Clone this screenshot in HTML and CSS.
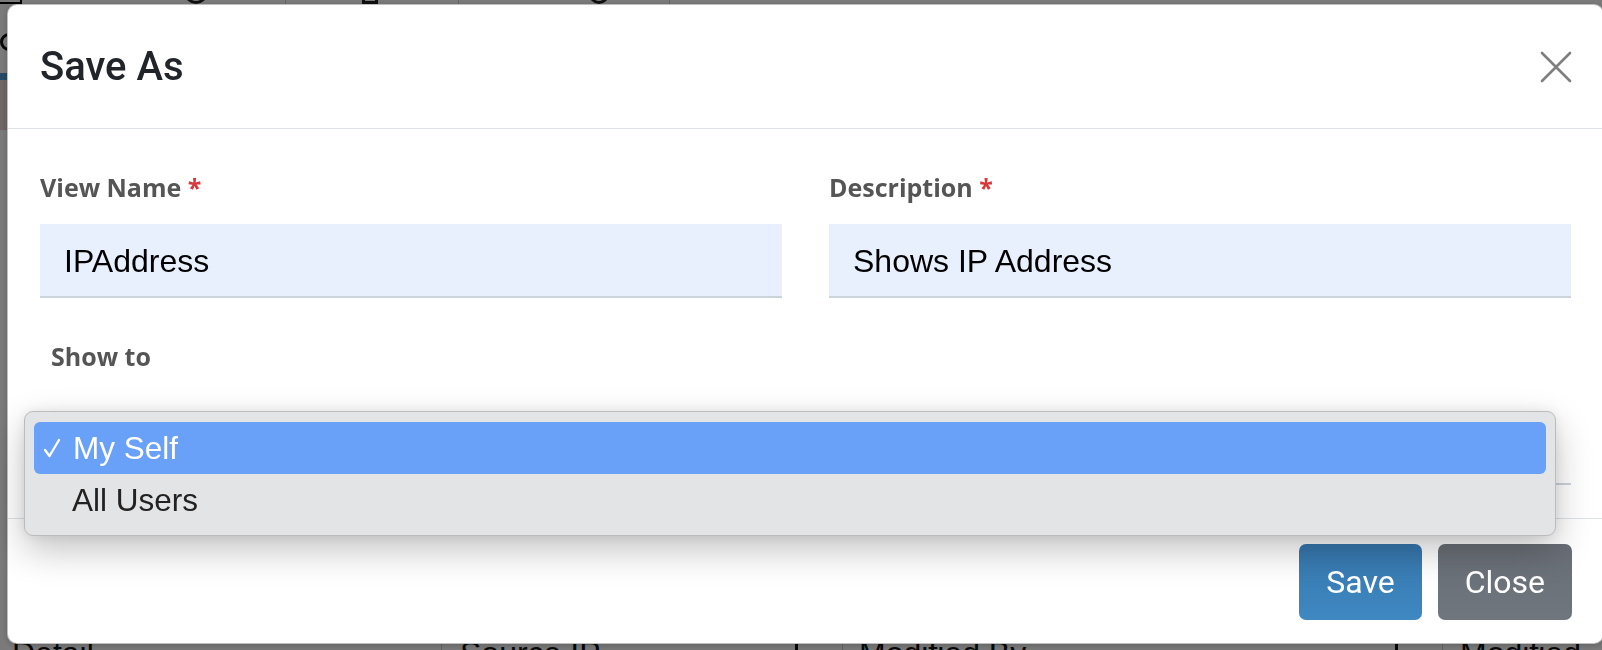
FILE: index.html
```html
<!DOCTYPE html>
<html lang="en">
<head>
<meta charset="utf-8">
<title>Save As</title>
<link rel="stylesheet" href="styles.css">
</head>
<body>
<div class="page">
  <div class="toolbar">
    <span class="tb-corner"></span>
    <span class="tb-icon tb-circle"></span>
    <span class="tb-sep tb-sep1"></span>
    <span class="tb-icon tb-doc"></span>
    <span class="tb-sep tb-sep2"></span>
    <span class="tb-icon tb-shield"></span>
    <span class="tb-sep tb-sep3"></span>
  </div>
  <div class="crumb"><span class="crumb-icon"></span></div>
  <div class="bluebar"></div>
  <div class="pinkrow"></div>
  <div class="spacer"></div>
  <div class="thead">
    <div class="th th-detail">Detail</div>
    <div class="th th-src"><span>Source IP</span><span class="grip"></span></div>
    <div class="th th-mod"><span>Modified By</span><span class="grip"></span></div>
    <div class="th th-date"><span>Modified</span></div>
  </div>
</div>

<div class="backdrop"></div>

<div class="modal">
  <div class="modal-header">
    <h5 class="modal-title">Save As</h5>
    <button class="btn-close" type="button" aria-label="Close">
      <svg width="32" height="32" viewBox="0 0 32 32"><path d="M2 2 L30 30 M30 2 L2 30" stroke="#7f7f7f" stroke-width="2.6" stroke-linecap="round" fill="none"/></svg>
    </button>
  </div>
  <div class="modal-body">
    <div class="row">
      <div class="field">
        <label class="label">View Name <span class="req">*</span></label>
        <div class="input">IPAddress</div>
      </div>
      <div class="field">
        <label class="label">Description <span class="req">*</span></label>
        <div class="input">Shows IP Address</div>
      </div>
    </div>
    <label class="label label-show">Show to</label>
    <div class="select-wrap">
      <div class="select" aria-label="Show to"></div>
      <div class="popup">
        <div class="option option-active">
          <svg class="check" width="18" height="20" viewBox="0 0 18 20"><path d="M2 12 L6.5 18 L16 2" stroke="#ffffff" stroke-width="2.3" fill="none" stroke-linecap="round" stroke-linejoin="round"/></svg>
          <span>My Self</span>
        </div>
        <div class="option">
          <span class="check-space"></span>
          <span>All Users</span>
        </div>
      </div>
    </div>
  </div>
  <div class="modal-footer">
    <button class="btn btn-save" type="button">Save</button>
    <button class="btn btn-close-footer" type="button">Close</button>
  </div>
</div>
</body>
</html>
```

FILE: styles.css
```css
html, body {
  margin: 0;
  padding: 0;
  height: 650px;
  overflow: hidden;
}

body {
  font-family: "Liberation Sans", Arial, sans-serif;
  background: #ffffff;
  color: #212529;
}

/* ---------- background page (behind the backdrop) ---------- */
.page {
  width: 1602px;
  display: flex;
  flex-direction: column;
}

.toolbar {
  height: 5px;
  display: flex;
  align-items: flex-end;
  overflow: hidden;
}

.tb-corner {
  width: 20px;
  height: 10px;
  border-right: 2px solid #000;
  border-bottom: 2px solid #000;
  margin-bottom: 1px;
  flex: none;
}

.tb-icon {
  flex: none;
  height: 20px;
  border: 3px solid #222;
  box-sizing: border-box;
  margin-bottom: 1px;
}

.tb-circle {
  width: 22px;
  border-radius: 50%;
  margin-left: 163px;
}

.tb-doc {
  width: 16px;
  margin-left: 76px;
}

.tb-shield {
  width: 20px;
  border-radius: 0 0 10px 10px;
  margin-left: 130px;
}

.tb-sep {
  flex: none;
  width: 1px;
  height: 5px;
  background: #cfcfcf;
}

.tb-sep1 { margin-left: 78px; }
.tb-sep2 { margin-left: 80px; }
.tb-sep3 { margin-left: 60px; }

.crumb {
  height: 68px;
  box-sizing: border-box;
  padding-top: 28px;
}

.crumb-icon {
  display: block;
  width: 18px;
  height: 18px;
  box-sizing: border-box;
  border: 3px solid #111;
  border-radius: 50%;
}

.bluebar {
  height: 7px;
  background: #4f9ad4;
}

.pinkrow {
  height: 50px;
  background: #e8d6d6;
}

.spacer {
  height: 503px;
}

.thead {
  display: flex;
  height: 40px;
  font-size: 32px;
  line-height: 40px;
  color: #111;
}

.th {
  box-sizing: border-box;
  display: flex;
  justify-content: space-between;
  white-space: nowrap;
  flex: none;
}

.th-detail { width: 441px; padding-left: 12px; }
.th-src { width: 401px; padding-left: 18px; border-left: 1px solid #cfcfcf; }
.th-mod { width: 600px; padding-left: 16px; border-left: 1px solid #cfcfcf; }
.th-date { width: 160px; padding-left: 17px; border-left: 1px solid #cfcfcf; }

.grip {
  width: 3px;
  height: 40px;
  background: #111;
  margin-right: 44px;
}

/* ---------- backdrop ---------- */
.backdrop {
  position: fixed;
  inset: 0;
  background: rgba(0, 0, 0, 0.52);
}

/* ---------- modal ---------- */
.modal {
  position: fixed;
  left: 7px;
  top: 4px;
  width: 1597px;
  height: 640px;
  box-sizing: border-box;
  background: #ffffff;
  border: 1px solid rgba(0, 0, 0, 0.25);
  border-radius: 10px;
  display: flex;
  flex-direction: column;
  box-shadow: 0 2px 6px rgba(0, 0, 0, 0.2);
}

.modal-header {
  display: flex;
  align-items: center;
  justify-content: space-between;
  padding: 32px 31px 31px 32px;
  border-bottom: 1px solid #dee2e6;
}

.modal-title {
  margin: 0;
  font-family: Roboto, "Liberation Sans", sans-serif;
  font-weight: 500;
  font-size: 40px;
  line-height: 60px;
  color: #212529;
}

.btn-close {
  border: 0;
  background: transparent;
  padding: 0;
  width: 32px;
  height: 32px;
  display: block;
}

.btn-close svg {
  display: block;
}

.modal-body {
  flex: 1;
  padding: 40px 32px 33px 32px;
  display: flex;
  flex-direction: column;
}

.row {
  display: grid;
  grid-template-columns: 1fr 1fr;
  column-gap: 47px;
}

.field {
  display: flex;
  flex-direction: column;
}

.label {
  display: block;
  font-family: "Open Sans", "Liberation Sans", sans-serif;
  font-weight: 700;
  font-size: 25px;
  line-height: 36px;
  color: #555555;
  margin-bottom: 19px;
}

.req {
  color: #d9383a;
}

.input {
  height: 74px;
  box-sizing: border-box;
  background: #e8f0fe;
  border-bottom: 2px solid #cdd3da;
  padding: 3px 24px 0 24px;
  display: flex;
  align-items: center;
  font-family: "Liberation Sans", Arial, sans-serif;
  font-size: 32px;
  color: #000000;
}

.label-show {
  margin-top: 40px;
  margin-bottom: 37px;
  padding-left: 11px;
}

.select-wrap {
  position: relative;
}

.select {
  height: 74px;
  box-sizing: border-box;
  background: #ffffff;
  border-bottom: 2px solid #cdd3da;
}

/* native-looking popup menu, over the select */
.popup {
  position: absolute;
  top: 0;
  left: -16px;
  right: 15px;
  height: 125px;
  box-sizing: border-box;
  padding: 10px 9px 9px 9px;
  background: #e3e4e6;
  border: 1px solid #bcbcbe;
  border-radius: 9px;
  box-shadow: 0 14px 36px rgba(0, 0, 0, 0.24), 0 0 12px rgba(0, 0, 0, 0.07);
}

.option {
  height: 52px;
  display: flex;
  align-items: center;
  padding-left: 9px;
  border-radius: 6px;
  font-family: "Liberation Sans", Arial, sans-serif;
  font-size: 31.5px;
  color: #222222;
}

.option-active {
  background: #69a0f8;
  color: #ffffff;
}

.check {
  display: block;
  flex: none;
  margin-right: 12px;
}

.check-space {
  width: 18px;
  flex: none;
  margin-right: 11px;
}

/* ---------- footer ---------- */
.modal-footer {
  display: flex;
  justify-content: flex-end;
  gap: 16px;
  padding: 25px 31px 23px 32px;
  border-top: 1px solid #dee2e6;
}

.btn {
  height: 76px;
  padding: 0 27px;
  border: 0;
  border-radius: 7px;
  font-family: Roboto, "Liberation Sans", sans-serif;
  font-size: 32px;
  color: #ffffff;
}

.btn-save {
  background: linear-gradient(#3677ad, #3f88c2);
}

.btn-close-footer {
  background: linear-gradient(#696e76, #6f767e);
}
```
